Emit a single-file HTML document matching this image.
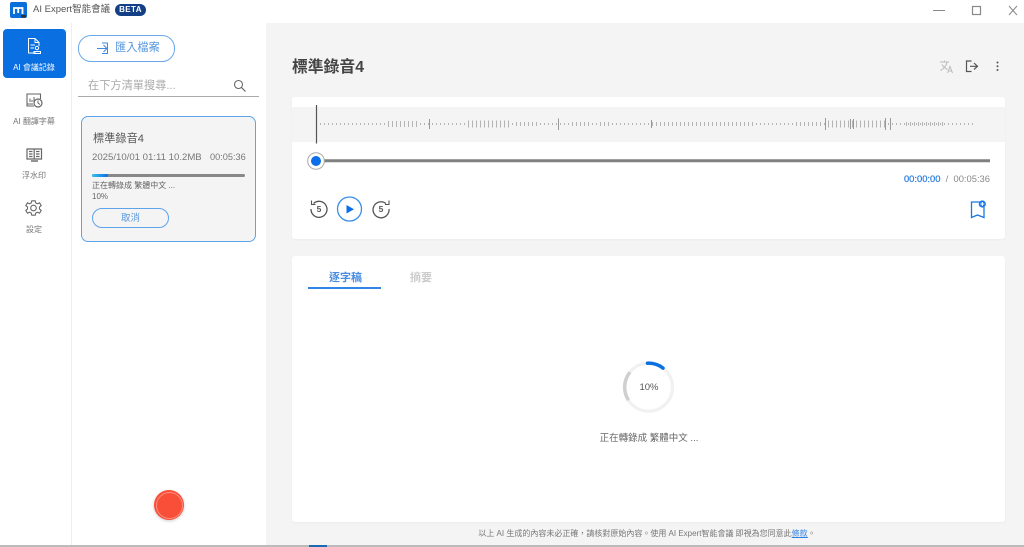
<!DOCTYPE html>
<html lang="zh-Hant"><head><meta charset="utf-8"><title>AI Expert</title>
<style>
html,body{margin:0;padding:0;width:1024px;height:547px;overflow:hidden;background:#fff}
body{position:relative;font-family:"Liberation Sans","Noto Sans CJK TC",sans-serif;color:#555}
.a{position:absolute;white-space:nowrap;line-height:1}
.c{transform:translateX(-50%)}
svg{position:absolute;overflow:visible;fill:none}
</style></head><body>
<div class="a" style="left:266px;top:23px;width:758px;height:522px;background:#f4f4f4"></div>
<div class="a" style="left:71px;top:23px;width:1px;height:522px;background:#eee"></div>
<div class="a" style="left:0;top:545px;width:1024px;height:2px;background:#bbb"></div>
<div class="a" style="left:309px;top:545px;width:18px;height:2px;background:#1c6bb0"></div>

<!-- title bar -->
<div class="a" style="left:10px;top:2px;width:17px;height:16px;border-radius:2px;background:#0a6fd8"></div>
<svg style="left:10px;top:2px" width="17" height="16"><path d="M4 12V6H12.500V12M8.200 6.500V11" stroke="#fff" stroke-width="1.800"/><rect x="11" y="13" width="5" height="2.500" fill="#333"/></svg>
<div class="a" style="left:33px;top:5px;font-size:9.500px;color:#555">AI Expert智能會議</div>
<div class="a" style="left:115px;top:4px;width:31px;height:12px;border-radius:6px;background:#123f86;color:#fff;font-size:8px;font-weight:bold;line-height:12px;text-align:center;letter-spacing:.4px">BETA</div>
<svg style="left:0;top:0" width="1024" height="23">
<path d="M933 10.500H945" stroke="#888" stroke-width="1"/>
<rect x="972.500" y="6.500" width="8" height="8" stroke="#888" stroke-width="1.200"/>
<path d="M1009 6L1017 15M1017 6L1009 15" stroke="#888" stroke-width="1"/>
</svg>

<!-- sidebar -->
<div class="a" style="left:3px;top:29px;width:63px;height:49px;border-radius:4px;background:#0a6fe0"></div>
<svg style="left:0;top:0" width="72" height="250">
<g stroke="#fff" stroke-width="1"><path d="M36 53H28.500V38.500H35L39 42.500V46M35 38.500V42.500H39M30.500 45H35M30.500 48H34"/><circle cx="37" cy="48" r="1.700"/><path d="M34 53.500H40.500V51.500H34Z"/></g>
<g stroke="#666" stroke-width="1"><path d="M34 106H27V94H40.500V99M27 104H33" stroke-width="1.100"/><circle cx="38" cy="103" r="4" stroke-width="1.200"/><path d="M38 100.500V103L40 104.500M30 102V98.500M32 102V100M34 102V97"/></g>
<g stroke="#666" stroke-width="1"><path d="M27 149H41.500V159H27ZM34.200 149V159M29 151.500H32.500M29 154H32.500M29 156.500H32.500M36 151.500H39.500M36 154H39.500M36 156.500H39.500" stroke-width="1.200"/><path d="M31 161H38" stroke-width="1.400"/></g>
<g stroke="#666" stroke-width="1.100"><circle cx="33.500" cy="208" r="2.800"/><path d="M31.800 200.800H35.200L35.800 203L37.600 203.800L39.600 202.800L41.200 205.600L39.500 207V209L41.200 210.400L39.600 213.200L37.600 212.200L35.800 213L35.200 215.200H31.800L31.200 213L29.400 212.200L27.400 213.200L25.800 210.400L27.500 209V207L25.800 205.600L27.400 202.800L29.400 203.800L31.200 203L31.800 200.800Z"/></g>
</svg>
<div class="a c" style="left:34px;top:64px;font-size:8px;color:#fff">AI 會議記錄</div>
<div class="a c" style="left:34px;top:118px;font-size:8px;color:#777">AI 翻譯字幕</div>
<div class="a c" style="left:34px;top:172px;font-size:8px;color:#777">浮水印</div>
<div class="a c" style="left:34px;top:226px;font-size:8px;color:#777">設定</div>

<!-- list panel -->
<div class="a" style="left:78px;top:35px;width:95px;height:25px;border:1.300px solid #6aa8ea;border-radius:13px"></div>
<svg style="left:0;top:0" width="270" height="100">
<path d="M97 48.500H106.500M103.500 45L107 48.500L103.500 52M102 43H107.500V53.500H102" stroke="#3d8ae0" stroke-width="1"/>
<circle cx="238.500" cy="84.500" r="4" stroke="#666" stroke-width="1.100"/><path d="M241.500 87.500L245.500 91.500" stroke="#666" stroke-width="1.200"/>
</svg>
<div class="a" style="left:115px;top:43px;font-size:11.200px;color:#5a98de">匯入檔案</div>
<div class="a" style="left:88px;top:81px;font-size:11.200px;color:#aaa">在下方清單搜尋...</div>
<div class="a" style="left:78px;top:96px;width:181px;height:1px;background:#aaa"></div>

<div class="a" style="left:81px;top:116px;width:173px;height:124px;border:1.200px solid #5fa3ea;border-radius:7px;background:#f4f4f4"></div>
<div class="a" style="left:93px;top:134px;font-size:11.200px;color:#555">標準錄音4</div>
<div class="a" style="left:92px;top:153px;font-size:9.600px;color:#777">2025/10/01 01:11 10.2MB</div>
<div class="a" style="left:210px;top:153px;font-size:9.200px;color:#777">00:05:36</div>
<div class="a" style="left:92px;top:174px;width:153px;height:3px;border-radius:2px;background:#888"></div>
<div class="a" style="left:92px;top:174px;width:16px;height:3px;border-radius:2px;background:linear-gradient(90deg,#36c0ee,#0a6fe0)"></div>
<div class="a" style="left:92px;top:182px;font-size:8px;color:#666">正在轉錄成 繁體中文 ...</div>
<div class="a" style="left:92px;top:193px;font-size:8px;color:#666">10%</div>
<div class="a" style="left:92px;top:208px;width:75px;height:18px;border:1.200px solid #5fa3ea;border-radius:10px;text-align:center;font-size:9.500px;line-height:20px;color:#5a98de">取消</div>

<div class="a" style="left:154px;top:490px;width:30px;height:30px;border-radius:50%;background:#f94f38;box-shadow:0 1px 3px rgba(0,0,0,.2)"></div>
<div class="a" style="left:156px;top:492px;width:25px;height:25px;border-radius:50%;border:1px solid #ff8f7f"></div>

<!-- header -->
<div class="a" style="left:292px;top:60px;font-size:15.800px;font-weight:bold;color:#444">標準錄音4</div>
<svg style="left:0;top:0" width="1024" height="90">
<path d="M940 62H949M944.500 60.500V62M947 62.500C946 66 943.500 69 940.500 70.500M942 64.500C943.500 67 945.500 68.500 947.500 69.500M947.500 73L950 66.500L952.500 73M948.500 71H951.500" stroke="#bbb" stroke-width="1"/>
<path d="M971.500 61H966.500V71.500H971.500M970 66.300H977M974 63L977.500 66.300L974 69.500" stroke="#555" stroke-width="1.200"/>
<circle cx="997.500" cy="62.500" r="1" fill="#555"/><circle cx="997.500" cy="66.300" r="1" fill="#555"/><circle cx="997.500" cy="70" r="1" fill="#555"/>
</svg>

<!-- player card -->
<div class="a" style="left:292px;top:97px;width:713px;height:142px;background:#fff;border-radius:3px;box-shadow:0 1px 2px rgba(0,0,0,.04)"></div>
<div class="a" style="left:292px;top:107px;width:713px;height:35px;background:#f4f4f4"></div>
<svg style="left:0;top:0" width="1024" height="240">
<path d="M316.500 105V143.500" stroke="#555" stroke-width="1.200"/>
<g stroke="#b4b4b4" stroke-width="1">
<path d="M320 124H976" stroke-dasharray="1 3" stroke-width="2"/>
<path d="M388 124H420" stroke-dasharray="1 3" stroke-width="6"/>
<path d="M468 124H512" stroke-dasharray="1 3" stroke-width="7"/>
<path d="M516 124H540M572 124H590M600 124H612" stroke-dasharray="1 3" stroke-width="4"/>
<path d="M652 124H756" stroke-dasharray="1 3" stroke-width="4"/>
<path d="M796 124H824M906 124H946" stroke-dasharray="1 3" stroke-width="4"/>
<path d="M828 124H888" stroke-dasharray="1 3" stroke-width="7"/>
<path d="M429.500 119V129M558.500 118.500V130M651.500 120V128M825.500 118V130M850.500 119V129M853.500 119V129M885.500 118V130M890.500 118V130" stroke="#999"/>
</g>
<path d="M316 160.800H990" stroke="#808080" stroke-width="3"/>
<circle cx="316" cy="161" r="8.300" fill="#fff" stroke="#aaa" stroke-width="1"/>
<circle cx="316" cy="161" r="5" fill="#0a6fe8"/>
<g stroke="#555" stroke-width="1.300"><path d="M313.500 203.500A8 8 0 1 1 311 209"/><path d="M311.500 200.500V204.500H315.500" stroke-width="1.100"/></g>
<g stroke="#555" stroke-width="1.300"><path d="M386 203.500A8 8 0 1 0 389 209"/><path d="M389 200.500V204.500H385" stroke-width="1.100"/></g>
<circle cx="349.500" cy="209" r="12" stroke="#3a8ee8" stroke-width="1.300"/>
<path d="M346.500 205V213.500L354 209.200Z" fill="#0a6fe8"/>
<path d="M980 202H971.500V217.500L977.500 215L984 217.500V207" stroke="#1a78e6" stroke-width="1.300"/>
<circle cx="982.300" cy="204" r="3.600" fill="#1a78e6"/><path d="M980.300 204H984.300M982.300 202V206" stroke="#fff" stroke-width="1"/>
</svg>
<div class="a c" style="left:319px;top:205px;font-size:8.500px;font-weight:bold;color:#555">5</div>
<div class="a c" style="left:381px;top:205px;font-size:8.500px;font-weight:bold;color:#555">5</div>
<div class="a" style="right:34px;top:174px;font-size:9.400px;color:#888"><span style="color:#2f7fe0;-webkit-text-stroke:.25px #2f7fe0">00:00:00</span>&nbsp; / &nbsp;00:05:36</div>

<!-- transcript card -->
<div class="a" style="left:292px;top:256px;width:713px;height:266px;background:#fff;border-radius:3px;box-shadow:0 1px 2px rgba(0,0,0,.04)"></div>
<div class="a c" style="left:345.500px;top:273px;font-size:11px;font-weight:bold;color:#4a8de2">逐字稿</div>
<div class="a c" style="left:421px;top:273px;font-size:11px;font-weight:bold;color:#ccc">摘要</div>
<div class="a" style="left:308px;top:287px;width:73px;height:2px;background:#2f86e8"></div>
<svg style="left:0;top:0" width="1024" height="547">
<circle cx="648.500" cy="387.200" r="24" stroke="#f1f1f1" stroke-width="3.200"/>
<path d="M630 372.200A24 24 0 0 0 628.500 400.200" stroke="#cfcfcf" stroke-width="3.500"/>
<path d="M647.500 363.200A24 24 0 0 1 663 368.100" stroke="#0a6fe0" stroke-width="3.500" stroke-linecap="round"/>
</svg>
<div class="a c" style="left:649px;top:383px;font-size:9.500px;color:#555">10%</div>
<div class="a c" style="left:649px;top:434px;font-size:9.500px;color:#666">正在轉錄成 繁體中文 ...</div>
<div class="a c" style="left:647px;top:530px;font-size:8px;color:#777">以上 AI 生成的內容未必正確，請核對原始內容。使用 AI Expert智能會議 即視為您同意此<span style="color:#2f7fe0;text-decoration:underline">條款</span>。</div>
</body></html>
